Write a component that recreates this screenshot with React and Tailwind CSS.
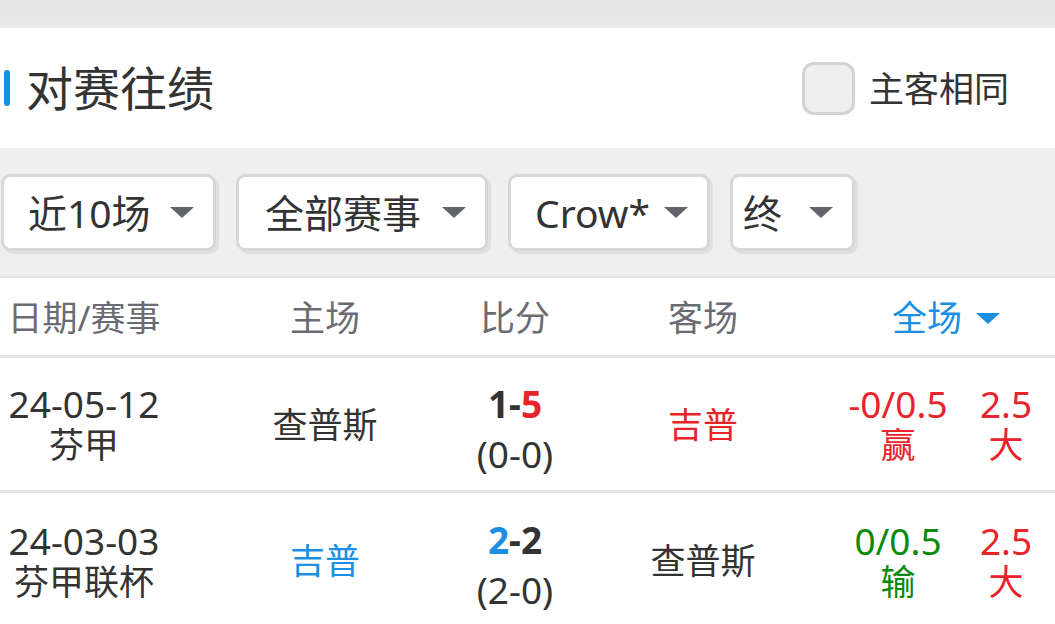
import React from "react";

const FONT = { fontFamily: '"Noto Sans", "Noto Sans CJK SC", sans-serif' };

const Caret = ({ color = "#62646b", w = 24, h = 11 }) => (
  <svg width={w} height={h} viewBox="0 0 24 11">
    <path d="M0 0 L24 0 L12 11 Z" fill={color} />
  </svg>
);

const filters = [
  { label: "近10场", width: "w-[215px]", pl: "pl-[24px]" },
  { label: "全部赛事", width: "w-[252px]", pl: "pl-[26px]" },
  { label: "Crow*", width: "w-[202px]", pl: "pl-[24px]" },
  { label: "终", width: "w-[125px]", pl: "pl-[10px]" },
];

const matches = [
  {
    date: "24-05-12",
    league: "芬甲",
    home: "查普斯",
    homeClass: "text-[#333333]",
    score: [
      { v: "1", c: "text-[#333333]" },
      { v: "-", c: "text-[#333333]" },
      { v: "5", c: "text-[#e8232a]" },
    ],
    half: "(0-0)",
    away: "吉普",
    awayClass: "text-[#e8232a]",
    hcp: "-0/0.5",
    hcpRes: "赢",
    hcpClass: "text-[#e8232a]",
    total: "2.5",
    totalRes: "大",
  },
  {
    date: "24-03-03",
    league: "芬甲联杯",
    home: "吉普",
    homeClass: "text-[#1a8fe3]",
    score: [
      { v: "2", c: "text-[#1a8fe3]" },
      { v: "-", c: "text-[#333333]" },
      { v: "2", c: "text-[#333333]" },
    ],
    half: "(2-0)",
    away: "查普斯",
    awayClass: "text-[#333333]",
    hcp: "0/0.5",
    hcpRes: "输",
    hcpClass: "text-[#0a8a0a]",
    total: "2.5",
    totalRes: "大",
  },
];

export default function App() {
  return (
    <div style={FONT} className="w-[1055px] h-[624px] overflow-hidden bg-white">
      {/* top strip */}
      <div className="h-[28px] bg-gradient-to-b from-[#e3e3e3] to-[#eaeaea]" />

      {/* title */}
      <div className="h-[120px] flex items-center justify-between bg-white">
        <div className="flex items-center">
          <div className="ml-[4px] w-[6px] h-[36px] rounded-full bg-[#1a8fe3]" />
          <h2 className="ml-[16px] text-[47px] leading-none text-[#333333]">对赛往绩</h2>
        </div>
        <label className="flex items-center mr-[46px]">
          <span className="w-[53px] h-[53px] rounded-[12px] border-[3px] border-[#d3d3d3] bg-[#efefef]" />
          <span className="ml-[14px] text-[35px] leading-none text-[#333333]">主客相同</span>
        </label>
      </div>

      {/* filters */}
      <div className="h-[130px] bg-[#efefef] flex items-center gap-[20px] pl-px border-b-[2px] border-[#e4e4e4]">
        {filters.map((f) => (
          <button
            key={f.label}
            className={`${f.width} ${f.pl} h-[77px] flex items-center justify-between pr-[19px] bg-white border-[3px] border-[#d7d7d7] rounded-[9px] shadow-[3px_3px_0_#e0e0e0]`}
          >
            <span className="text-[39px] leading-none text-[#333333]">{f.label}</span>
            <Caret />
          </button>
        ))}
      </div>

      {/* table header */}
      <div className="h-[80px] pt-[3px] flex items-center text-[35px] text-[#6b6b73] border-b-[3px] border-[#e4e4e4]">
        <div className="w-[168px] text-center">日期/赛事</div>
        <div className="ml-[72px] w-[170px] text-center">主场</div>
        <div className="ml-[20px] w-[170px] text-center">比分</div>
        <div className="ml-[20px] w-[166px] text-center">客场</div>
        <div className="ml-[54px] w-[212px] flex items-center justify-center gap-[14px] text-[#1a8fe3]">
          <span>全场</span>
          <Caret color="#1a8fe3" />
        </div>
      </div>

      {/* rows */}
      {matches.map((m, i) => (
        <div
          key={i}
          className={`h-[135px] flex items-center text-[35px] leading-[41px] ${i === 0 ? "border-b-[3px] border-[#e4e4e4]" : ""}`}
        >
          <div className="w-[168px] text-center text-[#333333] flex flex-col">
            <span className="text-[37px]">{m.date}</span>
            <span>{m.league}</span>
          </div>
          <div className={`ml-[72px] w-[170px] text-center ${m.homeClass}`}>{m.home}</div>
          <div className="ml-[20px] w-[170px] text-center text-[37px] flex flex-col gap-[9px] mt-[8px]">
            <span className="font-bold">
              {m.score.map((s, j) => (
                <span key={j} className={s.c}>
                  {s.v}
                </span>
              ))}
            </span>
            <span className="text-[#333333]">{m.half}</span>
          </div>
          <div className={`ml-[20px] w-[166px] text-center ${m.awayClass}`}>{m.away}</div>
          <div className={`ml-[54px] w-[116px] text-center flex flex-col ${m.hcpClass}`}>
            <span className="text-[37px]">{m.hcp}</span>
            <span>{m.hcpRes}</span>
          </div>
          <div className="ml-[4px] w-[92px] text-center flex flex-col text-[#e8232a]">
            <span className="text-[37px]">{m.total}</span>
            <span>{m.totalRes}</span>
          </div>
        </div>
      ))}
    </div>
  );
}
